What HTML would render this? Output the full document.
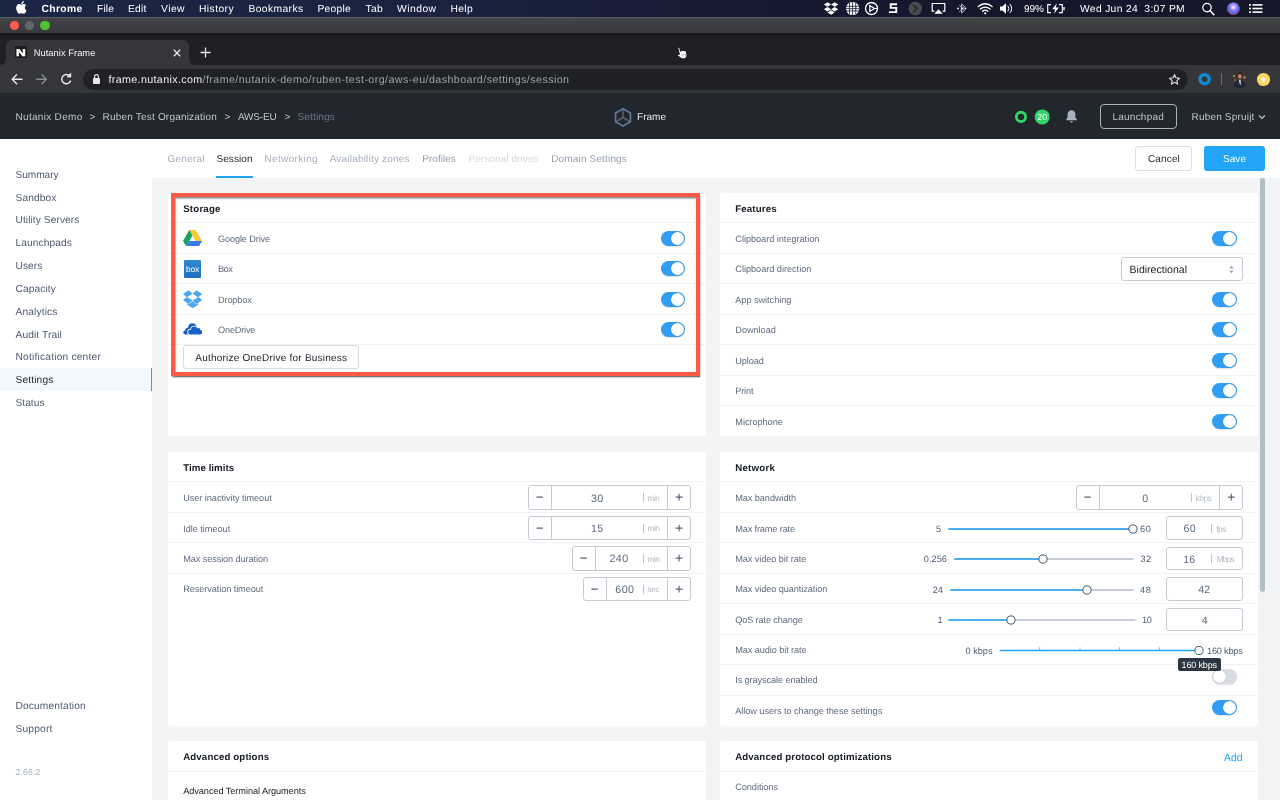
<!DOCTYPE html>
<html lang="en">
<head>
<meta charset="utf-8">
<title>Nutanix Frame</title>
<style>
*{box-sizing:border-box;margin:0;padding:0}
html,body{text-rendering:geometricPrecision;width:1280px;height:800px;overflow:hidden;background:#fff;font-family:"Liberation Sans",sans-serif;}
body{position:relative}
#root{position:absolute;left:0;top:0;width:1280px;height:800px;will-change:transform}
.a{position:absolute}
.t{position:absolute;white-space:nowrap;line-height:1;display:block}
.menubar{left:0;top:0;width:1280px;height:17px;background:linear-gradient(90deg,#1b2545 0%,#1a2240 35%,#15182e 65%,#14162a 100%)}
.titlebar{left:0;top:17px;width:1280px;height:17px;background:linear-gradient(180deg,#434447 0%,#3c3d40 60%,#38393c 100%);border-top:1px solid #5c5e62;border-bottom:1px solid #1a1a1c}
.tabstrip{left:0;top:34px;width:1280px;height:31px;background:linear-gradient(180deg,#1b1b1d 0,#1f2023 6px)}
.tab{left:6px;top:40px;width:183px;height:25px;background:#35363a;border-radius:6px 6px 0 0}
.toolbar{left:0;top:65px;width:1280px;height:28px;background:#35363a}
.urlpill{left:83px;top:68.5px;width:1105px;height:21px;border-radius:11px;background:#202124}
.apphead{left:0;top:93px;width:1280px;height:45.5px;background:#22272e}
.side{left:0;top:138.5px;width:152.300px;height:662px;background:#fff}
.tabsbar{left:152px;top:138.5px;width:1128px;height:39.5px;background:#fff}
.content{left:152px;top:178px;width:1128px;height:622px;background:#f2f4f6}
.card{position:absolute;background:#fff;border-radius:3px}
.hr{position:absolute;height:1px;background:#f0f2f5}
.tog{position:absolute;width:24.500px;height:15px;border-radius:8px;background:#2f9df1;box-shadow:0 1px 1px rgba(0,0,0,.12)}
.tog i{position:absolute;right:1px;top:1px;width:13px;height:13px;border-radius:50%;background:#fff;box-shadow:0 0 1px rgba(0,0,0,.3)}
.tog.off{background:#d8dce3}
.tog.off i{right:auto;left:1px}
.step{position:absolute;height:24.5px;border:1px solid #c5ccd6;border-radius:3px;background:#fff}
.step b{position:absolute;top:0;bottom:0;width:1px;background:#c5ccd6}
.inp{position:absolute;border:1px solid #c5ccd6;border-radius:3px;background:#fff}
.trk{position:absolute;height:1.600px;background:#b9c1cc;border-radius:1px}
.trk.on{background:#22a5f7}
.thumb{position:absolute;width:9px;height:9px;border-radius:50%;background:#fff;border:1px solid #4a5568}

</style>
</head>
<body>
<div id="root">
<div class="a menubar"></div>
<span class="t" style="left:41.50px;top:5.00px;font-size:10.3px;color:#ffffff;font-weight:700;letter-spacing:0.349px;">Chrome</span>
<span class="t" style="left:97.00px;top:5.00px;font-size:10.3px;color:#ffffff;letter-spacing:0.102px;">File</span>
<span class="t" style="left:128.00px;top:5.00px;font-size:10.3px;color:#ffffff;letter-spacing:0.188px;">Edit</span>
<span class="t" style="left:161.00px;top:5.00px;font-size:10.3px;color:#ffffff;letter-spacing:0.465px;">View</span>
<span class="t" style="left:199.00px;top:5.00px;font-size:10.3px;color:#ffffff;letter-spacing:0.422px;">History</span>
<span class="t" style="left:248.50px;top:5.00px;font-size:10.3px;color:#ffffff;letter-spacing:0.389px;">Bookmarks</span>
<span class="t" style="left:317.50px;top:5.00px;font-size:10.3px;color:#ffffff;letter-spacing:0.240px;">People</span>
<span class="t" style="left:365.50px;top:5.00px;font-size:10.3px;color:#ffffff;letter-spacing:0.297px;">Tab</span>
<span class="t" style="left:397.00px;top:5.00px;font-size:10.3px;color:#ffffff;letter-spacing:0.479px;">Window</span>
<span class="t" style="left:450.50px;top:5.00px;font-size:10.3px;color:#ffffff;letter-spacing:0.328px;">Help</span>
<span class="t" style="left:1024.00px;top:5.00px;font-size:10px;color:#ffffff;letter-spacing:-0.005px;">99%</span>
<span class="t" style="left:1080.00px;top:5.00px;font-size:10.3px;color:#ffffff;letter-spacing:0.324px;">Wed Jun 24&nbsp; 3:07 PM</span>
<svg class="a" style="left:15.1px;top:1.3px" width="12.75" height="12.75" viewBox="0 0 24 24"><path fill="#fff" d="M12.152 6.896c-.948 0-2.415-1.078-3.96-1.04-2.04.027-3.91 1.183-4.961 3.014-2.117 3.675-.546 9.103 1.519 12.09 1.013 1.454 2.208 3.09 3.792 3.039 1.52-.065 2.09-.987 3.935-.987 1.831 0 2.35.987 3.96.948 1.637-.026 2.676-1.48 3.676-2.948 1.156-1.688 1.636-3.325 1.662-3.415-.039-.013-3.182-1.221-3.22-4.857-.026-3.04 2.48-4.494 2.597-4.559-1.429-2.09-3.623-2.324-4.39-2.376-2-.156-3.675 1.09-4.61 1.09zM15.53 3.83c.843-1.012 1.4-2.427 1.245-3.83-1.207.052-2.662.805-3.532 1.818-.78.896-1.454 2.338-1.273 3.714 1.338.104 2.715-.688 3.559-1.701"/></svg>
<svg class="a" style="left:820px;top:0" width="460" height="17" viewBox="820 0 460 17">
<g fill="#fff">
<path d="M827.5 2.2l3.6 2.3-3.6 2.3-3.6-2.3zM834.7 2.2l3.6 2.3-3.6 2.3-3.6-2.3zM827.5 6.9l3.6 2.3-3.6 2.3-3.6-2.3zM834.7 6.9l3.6 2.3-3.6 2.3-3.6-2.3zM831.1 10.2l3.6 2.3-3.6 2.3-3.6-2.3z" transform="translate(0,0)"/>
<circle cx="852.6" cy="8.5" r="6.6"/>
</g>
<g stroke="#15182e" stroke-width="0.8" fill="none"><path d="M846 6.3h13M846 8.6h13M846 10.9h13M849.5 3v11M852.6 2v13M855.7 3v11"/></g>
<circle cx="871.5" cy="8.5" r="6" fill="none" stroke="#fff" stroke-width="1.3"/>
<path d="M869.8 5.6l4.6 2.9-4.6 2.9z M874.4 8.5h3" fill="none" stroke="#fff" stroke-width="1.2"/>
<path d="M897 4.3h-6.3v3.6h5.6v4.2h-7.3" fill="none" stroke="#fff" stroke-width="1.9"/>
<circle cx="915.3" cy="8.5" r="6.8" fill="#4a4a4c"/>
<path d="M913.5 5.3l3.4 3.2-3.4 3.2" fill="none" stroke="#2a2a2c" stroke-width="1.8"/>
<path d="M934.5 11.2h-2.3v-7.7h12.6v7.7h-2.3" fill="none" stroke="#fff" stroke-width="1.2"/>
<path d="M938.5 9.2l4.2 4.6h-8.4z" fill="#fff"/>
<path d="M959.3 5.2l5.4 5-3 2.8v-9l3 2.8-5.4 5" fill="none" stroke="#cfd3e0" stroke-width="0.9"/>
<circle cx="958" cy="8.5" r="0.9" fill="#fff"/><circle cx="961.7" cy="8.5" r="0.9" fill="#fff"/><circle cx="965.4" cy="8.5" r="0.9" fill="#fff"/>
<g fill="none" stroke="#fff" stroke-width="1.3" stroke-linecap="round"><path d="M978.2 6.6a10 10 0 0 1 14 0"/><path d="M980.4 9a7 7 0 0 1 9.6 0"/><path d="M982.6 11.3a4 4 0 0 1 5.2 0"/></g>
<circle cx="985.2" cy="13.3" r="1.1" fill="#fff"/>
<path d="M1000 6.4h2.4l3.6-3.2v10.6l-3.6-3.2h-2.4z" fill="#fff"/>
<g fill="none" stroke="#fff" stroke-width="1" stroke-linecap="round"><path d="M1008 6a3.6 3.6 0 0 1 0 5"/><path d="M1010 4.2a6 6 0 0 1 0 8.600"/></g>
<path d="M1051 4.600h-3.300v8h3.300M1059 4.600h3.300v8h-3.300" fill="none" stroke="#fff" stroke-width="1.100"/>
<path d="M1064 7v3.200" stroke="#fff" stroke-width="1.400"/>
<path d="M1056.800 3.200l-4.600 6h3l-1.200 4.600 4.800-6.200h-3z" fill="#fff"/>
<circle cx="1207" cy="7.600" r="4.200" fill="none" stroke="#fff" stroke-width="1.300"/><path d="M1210 10.800l3.800 3.800" stroke="#fff" stroke-width="1.500" stroke-linecap="round"/>
<defs><radialGradient id="siri" cx="50%" cy="40%" r="60%"><stop offset="0" stop-color="#fff"/><stop offset="0.35" stop-color="#b58cf0"/><stop offset="0.7" stop-color="#4a6ee0"/><stop offset="1" stop-color="#c04a9a"/></radialGradient></defs>
<circle cx="1233.400" cy="8.500" r="6.300" fill="url(#siri)"/>
<g fill="#fff"><rect x="1249" y="4.100" width="2" height="1.600"/><rect x="1252.500" y="4.100" width="10" height="1.600"/><rect x="1249" y="7.700" width="2" height="1.600"/><rect x="1252.500" y="7.700" width="10" height="1.600"/><rect x="1249" y="11.300" width="2" height="1.600"/><rect x="1252.500" y="11.300" width="10" height="1.600"/></g>
</svg>
<div class="a titlebar"></div>
<div class="a" style="left:9.9px;top:20.700000000000003px;width:9.2px;height:9.2px;border-radius:50%;background:#fe5a52"></div>
<div class="a" style="left:24.9px;top:20.700000000000003px;width:9.2px;height:9.2px;border-radius:50%;background:#636669"></div>
<div class="a" style="left:40.4px;top:20.700000000000003px;width:9.2px;height:9.2px;border-radius:50%;background:#4fc02f"></div>
<div class="a tabstrip"></div><div class="a tab"></div>
<div class="a" style="left:0;top:59px;width:6px;height:6px;background:#35363a"></div><div class="a" style="left:-6px;top:53px;width:12px;height:12px;border-radius:50%;background:#1f2023"></div>
<div class="a" style="left:189px;top:59px;width:6px;height:6px;background:#35363a"></div><div class="a" style="left:189px;top:53px;width:12px;height:12px;border-radius:50%;background:#1f2023"></div>
<div class="a" style="left:15.200px;top:46.300px;width:11.800px;height:11.800px;border-radius:1.500px;background:#1c1c1e"></div>
<span class="t" style="left:16.10px;top:49.00px;font-size:9.8px;color:#fff;font-weight:700;transform:scaleX(1.38);transform-origin:left;-webkit-text-stroke:0.500px #fff;">N</span>
<span class="t" style="left:33.70px;top:49.00px;font-size:9.3px;color:#f1f3f4;letter-spacing:0.056px;">Nutanix Frame</span>
<svg class="a" style="left:172px;top:47.5px" width="10" height="10" viewBox="0 0 10 10"><path d="M1.800 1.800l6.400 6.400M8.200 1.800l-6.400 6.400" stroke="#e8eaed" stroke-width="1.300"/></svg>
<svg class="a" style="left:199px;top:46px" width="13" height="13" viewBox="0 0 13 13"><path d="M6.500 1.500v10M1.500 6.500h10" stroke="#e8eaed" stroke-width="1.300"/></svg>
<svg class="a" style="left:675px;top:45px;transform:rotate(-14deg)" width="14" height="16" viewBox="0 0 14 16"><path d="M4.200 8.700V2.600a.9.900 0 0 1 1.800 0V6.300l.2-.6a.9.900 0 0 1 1.700.3l.2.200a.9.900 0 0 1 1.600.3l.2.300a.8.800 0 0 1 1.500.5V10.200c0 2.200-1.100 3.800-3.200 3.800H7.300c-1.400 0-2.200-.6-2.900-1.700L2 9.400c-.5-.9.600-1.600 1.300-.9z" fill="#fff" stroke="#0c0c0e" stroke-width="0.800" stroke-linejoin="round"/><path d="M6.500 9.200v2.600M8.200 9.200v2.600M9.900 9.200v2.600" stroke="#777" stroke-width="0.500"/></svg>
<div class="a toolbar"></div><div class="a urlpill"></div>
<svg class="a" style="left:8px;top:70px" width="70" height="18" viewBox="8 70 70 18" fill="none" stroke-linecap="round" stroke-linejoin="round">
<path d="M22 79.300H12.400M16.600 74.800l-4.400 4.500 4.400 4.500" stroke="#e8eaed" stroke-width="1.400"/>
<path d="M36.500 79.300h9.600M41.900 74.800l4.400 4.500-4.400 4.500" stroke="#8a8d92" stroke-width="1.400"/>
<path d="M70 76.300a4.600 4.600 0 1 0 .5 4.800" stroke="#e8eaed" stroke-width="1.400"/><path d="M70.800 73.600v3.400h-3.400z" fill="#e8eaed" stroke="#e8eaed" stroke-width="0.800"/>
</svg>
<svg class="a" style="left:92px;top:73px" width="9" height="12" viewBox="0 0 9 12"><rect x="1" y="5" width="7" height="6" rx="1" fill="#e8eaed"/><path d="M2.600 5V3.500a1.900 1.900 0 0 1 3.800 0V5" fill="none" stroke="#e8eaed" stroke-width="1.200"/></svg>
<span class="t" style="left:108.50px;top:75.00px;font-size:10.7px;color:#e8eaed;letter-spacing:0.358px;">frame.nutanix.com</span>
<span class="t" style="left:202.50px;top:75.00px;font-size:10.7px;color:#9aa0a6;letter-spacing:0.426px;">/frame/nutanix-demo/ruben-test-org/aws-eu/dashboard/settings/session</span>
<svg class="a" style="left:1168px;top:72.500px" width="13" height="13" viewBox="0 0 24 24"><path d="M12 3.300l2.700 5.700 6.200.8-4.500 4.300 1.100 6.200L12 17.300l-5.500 3 1.100-6.200L3.100 9.800l6.200-.8z" fill="none" stroke="#e8eaed" stroke-width="2"/></svg>
<svg class="a" style="left:1197px;top:72px" width="15" height="15" viewBox="0 0 15 15"><circle cx="7.600" cy="7.200" r="4.600" fill="none" stroke="#0a8edc" stroke-width="3.300"/></svg>
<div class="a" style="left:1221px;top:73px;width:1px;height:12px;background:#6a6d72"></div>
<svg class="a" style="left:1230.500px;top:70.900px" width="17" height="17" viewBox="0 0 17 17"><defs><clipPath id="avc"><circle cx="8.500" cy="8.500" r="8.500"/></clipPath></defs><g clip-path="url(#avc)"><rect width="17" height="17" fill="#3b3430"/><circle cx="3" cy="5" r="1.200" fill="#8a8078"/><circle cx="13.500" cy="6.500" r="1.300" fill="#a58a52"/><circle cx="4" cy="9" r="0.800" fill="#b08a4a"/><path d="M2.500 17c0-5 2.500-7.500 6.300-7.500s6 2.500 6 7.500z" fill="#1f2531"/><ellipse cx="8.800" cy="3.300" rx="2.300" ry="1.700" fill="#2a1c14"/><ellipse cx="8.800" cy="5.300" rx="1.800" ry="2.400" fill="#c4835a"/><path d="M8 8.800h1.800l.4 5.200H7.800z" fill="#b9c6dc"/><path d="M8.700 11l.9 3-.9 3-.7-3z" fill="#1b1e26"/></g></svg>
<div class="a" style="left:1257.100px;top:73.100px;width:12.600px;height:12.600px;border-radius:50%;background:#fdd663"></div>
<svg class="a" style="left:1259.900px;top:75.800px" width="7" height="7" viewBox="0 0 7 7"><path d="M3.500 .6L6.400 3.600H4.600v2.600H2.400V3.600H.6z" fill="#fff"/></svg>
<div class="a apphead"></div>
<span class="t" style="left:15.50px;top:113.00px;font-size:10px;color:#bec6d0;letter-spacing:0.303px;">Nutanix Demo</span>
<span class="t" style="left:89.50px;top:113.00px;font-size:10px;color:#bec6d0;">&gt;</span>
<span class="t" style="left:102.50px;top:113.00px;font-size:10px;color:#bec6d0;letter-spacing:0.200px;">Ruben Test Organization</span>
<span class="t" style="left:224.50px;top:113.00px;font-size:10px;color:#bec6d0;">&gt;</span>
<span class="t" style="left:238.00px;top:113.00px;font-size:10px;color:#bec6d0;letter-spacing:-0.190px;">AWS-EU</span>
<span class="t" style="left:284.50px;top:113.00px;font-size:10px;color:#bec6d0;">&gt;</span>
<span class="t" style="left:297.50px;top:113.00px;font-size:10px;color:#6b7685;letter-spacing:0.170px;">Settings</span>
<svg class="a" style="left:613px;top:106.500px" width="20" height="21" viewBox="0 0 20 21" fill="none" stroke-linejoin="round"><path d="M10 10.500V2M10 10.500L3 14.600M10 10.500l7 4.100" stroke="#5d6168" stroke-width="1.500"/><path d="M10 1.700l7.400 4.300v8.700L10 19l-7.400-4.300V6z" stroke="#5f7898" stroke-width="1.700"/></svg>
<span class="t" style="left:637.00px;top:113.00px;font-size:10px;color:#e6e9ed;letter-spacing:0.019px;">Frame</span>
<svg class="a" style="left:1013px;top:109px" width="16" height="16" viewBox="0 0 16 16"><circle cx="8" cy="7.900" r="4.600" fill="none" stroke="#2fd566" stroke-width="2.900"/></svg>
<svg class="a" style="left:1034px;top:109px" width="16" height="16" viewBox="0 0 16 16"><circle cx="8.200" cy="7.900" r="7.500" fill="#2fd566"/></svg>
<span class="t" style="left:1037.20px;top:113.00px;font-size:8.8px;color:#fff;letter-spacing:0.202px;">20</span>
<svg class="a" style="left:1065px;top:109px" width="13" height="15" viewBox="0 0 13 15"><path d="M6.500 1.200c-2.400 0-3.900 1.800-3.900 4.200v2.800L1.200 10.400v.8h10.600v-.8L10.400 8.200V5.400c0-2.400-1.500-4.200-3.900-4.200z" fill="#a9b2bf"/><path d="M5.100 12.300a1.400 1.400 0 0 0 2.800 0z" fill="#a9b2bf"/></svg>
<div class="a" style="left:1100.200px;top:104.200px;width:76.400px;height:24.700px;border:1px solid #aab2bd;border-radius:4px"></div>
<span class="t" style="left:1112.50px;top:113.00px;font-size:10px;color:#bec6d0;letter-spacing:0.222px;">Launchpad</span>
<span class="t" style="left:1191.50px;top:113.00px;font-size:10px;color:#bec6d0;letter-spacing:0.185px;">Ruben Spruijt</span>
<svg class="a" style="left:1257.500px;top:114px" width="8" height="6" viewBox="0 0 8 6"><path d="M1.200 1.500l2.800 2.800 2.800-2.800" fill="none" stroke="#c3cad4" stroke-width="1.200"/></svg>
<div class="a side"></div>
<div class="a" style="left:0;top:368px;width:152px;height:23px;background:#f3faff"></div><div class="a" style="left:150.700px;top:368px;width:1.600px;height:23px;background:#22a5f7"></div>
<span class="t" style="left:15.50px;top:171.00px;font-size:10.2px;color:#4d5a6e;letter-spacing:-0.085px;">Summary</span>
<span class="t" style="left:15.50px;top:194.00px;font-size:10.2px;color:#4d5a6e;letter-spacing:0.112px;">Sandbox</span>
<span class="t" style="left:15.50px;top:216.00px;font-size:10.2px;color:#4d5a6e;letter-spacing:0.077px;">Utility Servers</span>
<span class="t" style="left:15.50px;top:239.00px;font-size:10.2px;color:#4d5a6e;letter-spacing:0.098px;">Launchpads</span>
<span class="t" style="left:15.50px;top:262.00px;font-size:10.2px;color:#4d5a6e;letter-spacing:0.078px;">Users</span>
<span class="t" style="left:15.50px;top:285.00px;font-size:10.2px;color:#4d5a6e;letter-spacing:0.107px;">Capacity</span>
<span class="t" style="left:15.50px;top:308.00px;font-size:10.2px;color:#4d5a6e;letter-spacing:0.137px;">Analytics</span>
<span class="t" style="left:15.50px;top:331.00px;font-size:10.2px;color:#4d5a6e;letter-spacing:0.109px;">Audit Trail</span>
<span class="t" style="left:15.50px;top:353.00px;font-size:10.2px;color:#4d5a6e;letter-spacing:0.208px;">Notification center</span>
<span class="t" style="left:15.50px;top:376.00px;font-size:10.2px;color:#1d242e;letter-spacing:0.148px;">Settings</span>
<span class="t" style="left:15.50px;top:399.00px;font-size:10.2px;color:#4d5a6e;letter-spacing:0.018px;">Status</span>
<span class="t" style="left:15.50px;top:702.00px;font-size:10.2px;color:#4d5a6e;letter-spacing:0.144px;">Documentation</span>
<span class="t" style="left:15.50px;top:725.00px;font-size:10.2px;color:#4d5a6e;letter-spacing:0.188px;">Support</span>
<span class="t" style="left:15.50px;top:768.00px;font-size:8.5px;color:#a3abb6;letter-spacing:0.227px;">2.66.2</span>
<div class="a tabsbar"></div><div class="a content"></div>
<span class="t" style="left:167.60px;top:155.00px;font-size:10px;color:#a5aebb;letter-spacing:0.217px;">General</span>
<span class="t" style="left:216.40px;top:155.00px;font-size:10px;color:#1d242e;letter-spacing:0.103px;">Session</span>
<span class="t" style="left:264.50px;top:155.00px;font-size:10px;color:#a5aebb;letter-spacing:0.347px;">Networking</span>
<span class="t" style="left:329.70px;top:155.00px;font-size:10px;color:#a5aebb;letter-spacing:0.198px;">Availability zones</span>
<span class="t" style="left:422.30px;top:155.00px;font-size:10px;color:#939dab;letter-spacing:0.030px;">Profiles</span>
<span class="t" style="left:468.40px;top:155.00px;font-size:10px;color:#d3d8df;letter-spacing:0.092px;">Personal drives</span>
<span class="t" style="left:551.20px;top:155.00px;font-size:10px;color:#939dab;letter-spacing:0.162px;">Domain Settings</span>
<div class="a" style="left:216.400px;top:176px;width:36.300px;height:2px;background:#22a5f7"></div>
<div class="a" style="left:1135.400px;top:146.400px;width:56.800px;height:24.200px;border:1px solid #d9dee4;border-radius:3px;background:#fff"></div>
<span class="t" style="left:1148.00px;top:155.00px;font-size:10px;color:#1d242e;letter-spacing:0.143px;">Cancel</span>
<div class="a" style="left:1204px;top:146.400px;width:60.800px;height:24.200px;border-radius:3px;background:#22a5f7"></div>
<span class="t" style="left:1223.00px;top:155.00px;font-size:10px;color:#fff;letter-spacing:0.051px;">Save</span>
<div class="a" style="left:1260px;top:177.600px;width:4.800px;height:414px;border-radius:2.400px;background:#b0bec5"></div>
<div class="card" style="left:167.5px;top:193px;width:538.5px;height:243px"></div>
<div class="card" style="left:720px;top:193px;width:538px;height:243px"></div>
<div class="card" style="left:167.5px;top:451.7px;width:538.5px;height:274px"></div>
<div class="card" style="left:720px;top:451.7px;width:538px;height:274px"></div>
<div class="card" style="left:167.5px;top:741.3px;width:538.5px;height:70px"></div>
<div class="card" style="left:720px;top:741.3px;width:538px;height:70px"></div>
<span class="t" style="left:183.20px;top:205.00px;font-size:9.7px;color:#171c23;font-weight:700;letter-spacing:0.203px;">Storage</span>
<div class="hr" style="left:167.5px;top:222px;width:538.5px"></div>
<div class="hr" style="left:167.5px;top:253px;width:538.5px"></div>
<div class="hr" style="left:167.5px;top:283px;width:538.5px"></div>
<div class="hr" style="left:167.5px;top:314px;width:538.5px"></div>
<div class="hr" style="left:167.5px;top:344px;width:538.5px"></div>
<span class="t" style="left:218.00px;top:235.00px;font-size:9.2px;color:#5f6b7d;letter-spacing:-0.135px;">Google Drive</span>
<div class="tog" style="left:660.5px;top:231.0px"><i></i></div>
<span class="t" style="left:218.00px;top:265.00px;font-size:9.2px;color:#5f6b7d;letter-spacing:-0.515px;">Box</span>
<div class="tog" style="left:660.5px;top:261.45px"><i></i></div>
<span class="t" style="left:218.00px;top:296.00px;font-size:9.2px;color:#5f6b7d;letter-spacing:-0.148px;">Dropbox</span>
<div class="tog" style="left:660.5px;top:291.9px"><i></i></div>
<span class="t" style="left:218.00px;top:326.00px;font-size:9.2px;color:#5f6b7d;letter-spacing:-0.189px;">OneDrive</span>
<div class="tog" style="left:660.5px;top:322.35px"><i></i></div>
<svg class="a" style="left:183px;top:230px" width="19" height="16.4" viewBox="0 0 19 16.4"><path d="M6.3 0h6.4l6.300 10.900h-6.400z" fill="#fbc934"/><path d="M6.300 0L0 10.900l3.200 5.500L9.500 5.500z" fill="#1aa05e"/><path d="M6.300 10.900h12.700l-3.200 5.500H3.200z" fill="#3b78e7"/></svg>
<div class="a" style="left:183.700px;top:259.800px;width:17.700px;height:17.800px;background:linear-gradient(180deg,#3089d6,#1e70bb);border-radius:1px"></div>
<span class="t" style="left:186.00px;top:265.00px;font-size:8.4px;color:#fff;letter-spacing:-0.172px;">box</span>
<svg class="a" style="left:183px;top:289.800px" width="19.200" height="18.600" viewBox="0 0 42.800 40"><path fill="#4ba7ef" d="M12.600 0 0 8.200l8.700 7 12.700-7.800zM0 22.100l12.600 8.200 8.800-7.400-12.700-7.800zM21.400 22.900l8.800 7.400 12.600-8.200-8.700-7zM42.800 8.200 30.200 0l-8.800 7.400 12.700 7.800zM21.500 24.500l-8.900 7.300-3.800-2.500v2.800l12.700 7.600 12.700-7.600v-2.800l-3.800 2.500z"/></svg>
<svg class="a" style="left:183px;top:323.400px" width="19.400" height="12" viewBox="0 0 19.400 12"><defs><clipPath id="odc"><rect x="0" y="0" width="19.400" height="11.700"/></clipPath></defs><g clip-path="url(#odc)"><g fill="#1660c8"><circle cx="9.4" cy="4.7" r="4.40"/><circle cx="4.9" cy="7.4" r="2.70"/><circle cx="2.4" cy="9.5" r="2.10"/><rect x="2.40" y="8.00" width="8.00" height="3.60"/></g><g fill="#fff"><circle cx="7.6" cy="9.1" r="3.35"/><circle cx="11.3" cy="6.7" r="4.05"/><circle cx="15.2" cy="7.3" r="3.15"/><circle cx="16.9" cy="9.3" r="3.15"/><rect x="6.75" y="7.15" width="11.00" height="4.45"/></g><g fill="#1660c8"><circle cx="7.6" cy="9.1" r="2.50"/><circle cx="11.3" cy="6.7" r="3.20"/><circle cx="15.2" cy="7.3" r="2.30"/><circle cx="16.9" cy="9.3" r="2.30"/><rect x="7.60" y="8.00" width="9.30" height="3.60"/></g></g></svg>
<div class="a" style="left:183.300px;top:345.400px;width:176.100px;height:24.100px;border:1px solid #d7dce3;border-radius:3px;background:#fff"></div>
<span class="t" style="left:195.30px;top:354.00px;font-size:10px;color:#171c23;letter-spacing:0.223px;">Authorize OneDrive for Business</span>
<div class="a" style="left:171px;top:193.100px;width:528.500px;height:182.900px;border:4px solid #fc5a47;box-shadow:0.5px 1.500px 1.500px rgba(50,60,64,.7), inset 0.5px 1.500px 1.500px rgba(50,60,64,.6)"></div>
<span class="t" style="left:735.30px;top:205.00px;font-size:9.7px;color:#171c23;font-weight:700;letter-spacing:0.126px;">Features</span>
<div class="hr" style="left:720px;top:222px;width:538px"></div>
<div class="hr" style="left:720px;top:253px;width:538px"></div>
<div class="hr" style="left:720px;top:283px;width:538px"></div>
<div class="hr" style="left:720px;top:314px;width:538px"></div>
<div class="hr" style="left:720px;top:344px;width:538px"></div>
<div class="hr" style="left:720px;top:375px;width:538px"></div>
<div class="hr" style="left:720px;top:405px;width:538px"></div>
<span class="t" style="left:735.30px;top:235.00px;font-size:9.2px;color:#5f6b7d;letter-spacing:-0.038px;">Clipboard integration</span>
<div class="tog" style="left:1212px;top:231.0px"><i></i></div>
<span class="t" style="left:735.30px;top:265.00px;font-size:9.2px;color:#5f6b7d;letter-spacing:-0.032px;">Clipboard direction</span>
<span class="t" style="left:735.30px;top:296.00px;font-size:9.2px;color:#5f6b7d;letter-spacing:-0.053px;">App switching</span>
<div class="tog" style="left:1212px;top:291.9px"><i></i></div>
<span class="t" style="left:735.30px;top:326.00px;font-size:9.2px;color:#5f6b7d;letter-spacing:-0.045px;">Download</span>
<div class="tog" style="left:1212px;top:322.35px"><i></i></div>
<span class="t" style="left:735.30px;top:357.00px;font-size:9.2px;color:#5f6b7d;letter-spacing:-0.104px;">Upload</span>
<div class="tog" style="left:1212px;top:352.8px"><i></i></div>
<span class="t" style="left:735.30px;top:387.00px;font-size:9.2px;color:#5f6b7d;letter-spacing:-0.181px;">Print</span>
<div class="tog" style="left:1212px;top:383.25px"><i></i></div>
<span class="t" style="left:735.30px;top:418.00px;font-size:9.2px;color:#5f6b7d;letter-spacing:-0.052px;">Microphone</span>
<div class="tog" style="left:1212px;top:413.7px"><i></i></div>
<div class="a" style="left:1121px;top:257.200px;width:121.600px;height:23.400px;border:1px solid #c5ccd6;border-radius:3px;background:#fff"></div>
<span class="t" style="left:1129.50px;top:265.00px;font-size:10.5px;color:#171c23;letter-spacing:0.023px;">Bidirectional</span>
<svg class="a" style="left:1228.500px;top:264.500px" width="5" height="9" viewBox="0 0 5 9"><path d="M2.500 .5L4.600 3.400H.4zM2.500 8.500L4.600 5.600H.4z" fill="#9aa3b0"/></svg>
<span class="t" style="left:183.25px;top:464.00px;font-size:9.7px;color:#171c23;font-weight:700;letter-spacing:0.051px;">Time limits</span>
<div class="hr" style="left:167.5px;top:481px;width:538.5px"></div>
<div class="hr" style="left:167.5px;top:512px;width:538.5px"></div>
<div class="hr" style="left:167.5px;top:542px;width:538.5px"></div>
<div class="hr" style="left:167.5px;top:573px;width:538.5px"></div>
<span class="t" style="left:183.20px;top:494.00px;font-size:9.2px;color:#5f6b7d;letter-spacing:-0.060px;">User inactivity timeout</span>
<span class="t" style="left:183.20px;top:525.00px;font-size:9.2px;color:#5f6b7d;letter-spacing:-0.042px;">Idle timeout</span>
<span class="t" style="left:183.20px;top:555.00px;font-size:9.2px;color:#5f6b7d;letter-spacing:-0.106px;">Max session duration</span>
<span class="t" style="left:183.20px;top:585.00px;font-size:9.2px;color:#5f6b7d;letter-spacing:-0.090px;">Reservation timeout</span>
<div class="step" style="left:528.3px;top:485.3px;width:162.5px"><b style="left:22.2px"></b><b style="right:22.2px"></b></div>
<svg class="a" style="left:528.3px;top:485.3px" width="162.5" height="24.5" viewBox="0 0 162.5 24.5"><path d="M8.40 12.1h6.4M147.70 12.1h6.800M151.10 8.700v6.800" stroke="#566174" stroke-width="1.100" fill="none"/></svg>
<span class="t" style="left:591.05px;top:494.00px;font-size:10.7px;color:#5f6b7d;letter-spacing:0.205px;">30</span>
<div class="a" style="left:643.2px;top:493.0px;width:1px;height:9px;background:#bcc4ce"></div>
<span class="t" style="left:647.60px;top:494.00px;font-size:8.3px;color:#b3bbc6;letter-spacing:-0.592px;">min</span>
<div class="step" style="left:528.3px;top:515.8px;width:162.5px"><b style="left:22.2px"></b><b style="right:22.2px"></b></div>
<svg class="a" style="left:528.3px;top:515.8px" width="162.5" height="24.5" viewBox="0 0 162.5 24.5"><path d="M8.40 12.1h6.4M147.70 12.1h6.800M151.10 8.700v6.800" stroke="#566174" stroke-width="1.100" fill="none"/></svg>
<span class="t" style="left:591.05px;top:524.00px;font-size:10.7px;color:#5f6b7d;letter-spacing:0.205px;">15</span>
<div class="a" style="left:643.2px;top:523.5px;width:1px;height:9px;background:#bcc4ce"></div>
<span class="t" style="left:647.60px;top:524.00px;font-size:8.3px;color:#b3bbc6;letter-spacing:-0.592px;">min</span>
<div class="step" style="left:572.3px;top:546.3px;width:118.5px"><b style="left:22.2px"></b><b style="right:22.2px"></b></div>
<svg class="a" style="left:572.3px;top:546.3px" width="118.5" height="24.5" viewBox="0 0 118.5 24.5"><path d="M8.40 12.1h6.4M103.70 12.1h6.800M107.10 8.700v6.800" stroke="#566174" stroke-width="1.100" fill="none"/></svg>
<span class="t" style="left:609.50px;top:554.00px;font-size:10.7px;color:#5f6b7d;letter-spacing:0.385px;">240</span>
<div class="a" style="left:643.2px;top:554.0px;width:1px;height:9px;background:#bcc4ce"></div>
<span class="t" style="left:647.60px;top:555.00px;font-size:8.3px;color:#b3bbc6;letter-spacing:-0.592px;">min</span>
<div class="step" style="left:583.3px;top:576.8px;width:107.5px"><b style="left:22.2px"></b><b style="right:22.2px"></b></div>
<svg class="a" style="left:583.3px;top:576.8px" width="107.5" height="24.5" viewBox="0 0 107.5 24.5"><path d="M8.40 12.1h6.4M92.70 12.1h6.800M96.10 8.700v6.800" stroke="#566174" stroke-width="1.100" fill="none"/></svg>
<span class="t" style="left:615.30px;top:585.00px;font-size:10.7px;color:#5f6b7d;letter-spacing:0.385px;">600</span>
<div class="a" style="left:643.2px;top:584.5px;width:1px;height:9px;background:#bcc4ce"></div>
<span class="t" style="left:647.60px;top:585.00px;font-size:8.3px;color:#b3bbc6;letter-spacing:-0.441px;">sec</span>
<span class="t" style="left:735.20px;top:464.00px;font-size:9.7px;color:#171c23;font-weight:700;letter-spacing:0.252px;">Network</span>
<div class="hr" style="left:720px;top:481px;width:538px"></div>
<div class="hr" style="left:720px;top:512px;width:538px"></div>
<div class="hr" style="left:720px;top:542px;width:538px"></div>
<div class="hr" style="left:720px;top:573px;width:538px"></div>
<div class="hr" style="left:720px;top:603px;width:538px"></div>
<div class="hr" style="left:720px;top:634px;width:538px"></div>
<div class="hr" style="left:720px;top:664px;width:538px"></div>
<div class="hr" style="left:720px;top:695px;width:538px"></div>
<span class="t" style="left:735.20px;top:494.00px;font-size:9.2px;color:#5f6b7d;letter-spacing:-0.077px;">Max bandwidth</span>
<span class="t" style="left:735.20px;top:525.00px;font-size:9.2px;color:#5f6b7d;letter-spacing:-0.142px;">Max frame rate</span>
<span class="t" style="left:735.20px;top:555.00px;font-size:9.2px;color:#5f6b7d;letter-spacing:-0.084px;">Max video bit rate</span>
<span class="t" style="left:735.20px;top:585.00px;font-size:9.2px;color:#5f6b7d;letter-spacing:-0.090px;">Max video quantization</span>
<span class="t" style="left:735.20px;top:616.00px;font-size:9.2px;color:#5f6b7d;letter-spacing:-0.131px;">QoS rate change</span>
<span class="t" style="left:735.20px;top:646.00px;font-size:9.2px;color:#5f6b7d;letter-spacing:-0.096px;">Max audio bit rate</span>
<span class="t" style="left:735.20px;top:676.00px;font-size:9.2px;color:#5f6b7d;letter-spacing:-0.099px;">Is grayscale enabled</span>
<span class="t" style="left:735.20px;top:707.00px;font-size:9.2px;color:#5f6b7d;letter-spacing:-0.059px;">Allow users to change these settings</span>
<div class="step" style="left:1076.1px;top:485.3px;width:166.7px"><b style="left:22.2px"></b><b style="right:22.2px"></b></div>
<svg class="a" style="left:1076.1px;top:485.3px" width="166.7" height="24.5" viewBox="0 0 166.7 24.5"><path d="M8.40 12.1h6.4M151.90 12.1h6.800M155.30 8.700v6.800" stroke="#566174" stroke-width="1.100" fill="none"/></svg>
<span class="t" style="left:1142.30px;top:494.00px;font-size:10.7px;color:#5f6b7d;">0</span>
<div class="a" style="left:1191px;top:493.0px;width:1px;height:9px;background:#bcc4ce"></div>
<span class="t" style="left:1195.60px;top:494.00px;font-size:8.3px;color:#b3bbc6;letter-spacing:-0.383px;">kbps</span>
<div class="inp" style="left:1166.200px;top:516.2px;width:76.600px;height:23.700px"></div>
<span class="t" style="left:1183.55px;top:524.00px;font-size:10.7px;color:#5f6b7d;letter-spacing:0.205px;">60</span>
<div class="a" style="left:1211.200px;top:523.7px;width:1px;height:9px;background:#bcc4ce"></div>
<span class="t" style="left:1216.20px;top:525.00px;font-size:8.3px;color:#b3bbc6;letter-spacing:-0.426px;">fps</span>
<div class="inp" style="left:1166.200px;top:546.6px;width:76.600px;height:23.700px"></div>
<span class="t" style="left:1183.15px;top:555.00px;font-size:10.7px;color:#5f6b7d;letter-spacing:0.205px;">16</span>
<div class="a" style="left:1211.200px;top:554.1px;width:1px;height:9px;background:#bcc4ce"></div>
<span class="t" style="left:1216.70px;top:555.00px;font-size:8.3px;color:#b3bbc6;letter-spacing:-0.749px;">Mbps</span>
<div class="inp" style="left:1166.200px;top:577.1px;width:76.600px;height:23.700px"></div>
<span class="t" style="left:1198.15px;top:585.00px;font-size:10.7px;color:#5f6b7d;letter-spacing:0.205px;">42</span>
<div class="inp" style="left:1166.200px;top:607.6px;width:76.600px;height:23.700px"></div>
<span class="t" style="left:1201.70px;top:616.00px;font-size:10.7px;color:#5f6b7d;">4</span>
<svg class="a" style="left:900px;top:518.9px" width="360" height="20" viewBox="900 518.9 360 20"><path d="M949 528.9H1133" stroke="#b7bfca" stroke-width="1.600" stroke-linecap="round"/><path d="M949 528.9H1133" stroke="#22a5f7" stroke-width="1.700" stroke-linecap="round"/><circle cx="1133" cy="528.9" r="4.100" fill="#fff" stroke="#4a5568" stroke-width="1"/></svg>
<span class="t" style="left:936.00px;top:525.00px;font-size:9.2px;color:#4d5a6e;">5</span>
<span class="t" style="left:1140.00px;top:525.00px;font-size:9.2px;color:#4d5a6e;letter-spacing:0.633px;">60</span>
<svg class="a" style="left:900px;top:549.4px" width="360" height="20" viewBox="900 549.4 360 20"><path d="M955 559.4H1133" stroke="#b7bfca" stroke-width="1.600" stroke-linecap="round"/><path d="M955 559.4H1043" stroke="#22a5f7" stroke-width="1.700" stroke-linecap="round"/><circle cx="1043" cy="559.4" r="4.100" fill="#fff" stroke="#4a5568" stroke-width="1"/></svg>
<span class="t" style="left:923.75px;top:555.00px;font-size:9.2px;color:#4d5a6e;letter-spacing:0.050px;">0.256</span>
<span class="t" style="left:1140.50px;top:555.00px;font-size:9.2px;color:#4d5a6e;letter-spacing:0.383px;">32</span>
<svg class="a" style="left:900px;top:579.9px" width="360" height="20" viewBox="900 579.9 360 20"><path d="M951 589.9H1133" stroke="#b7bfca" stroke-width="1.600" stroke-linecap="round"/><path d="M951 589.9H1087" stroke="#22a5f7" stroke-width="1.700" stroke-linecap="round"/><circle cx="1087" cy="589.9" r="4.100" fill="#fff" stroke="#4a5568" stroke-width="1"/></svg>
<span class="t" style="left:932.75px;top:586.00px;font-size:9.2px;color:#4d5a6e;letter-spacing:-0.117px;">24</span>
<span class="t" style="left:1140.00px;top:586.00px;font-size:9.2px;color:#4d5a6e;letter-spacing:0.633px;">48</span>
<svg class="a" style="left:900px;top:610.3px" width="360" height="20" viewBox="900 610.3 360 20"><path d="M949 620.3H1135" stroke="#b7bfca" stroke-width="1.600" stroke-linecap="round"/><path d="M949 620.3H1011" stroke="#22a5f7" stroke-width="1.700" stroke-linecap="round"/><circle cx="1011" cy="620.3" r="4.100" fill="#fff" stroke="#4a5568" stroke-width="1"/></svg>
<span class="t" style="left:937.50px;top:616.00px;font-size:9.2px;color:#4d5a6e;">1</span>
<span class="t" style="left:1142.00px;top:616.00px;font-size:9.2px;color:#4d5a6e;letter-spacing:-0.367px;">10</span>
<svg class="a" style="left:990px;top:640px" width="220" height="20" viewBox="990 640 220 20"><path d="M1039.6 647.300V650M1080 647.300V650M1119.5 647.300V650M1159.4 647.300V650" stroke="#5bbcf9" stroke-width="0.900"/><path d="M1000.300 650.500H1199" stroke="#22a5f7" stroke-width="1.700" stroke-linecap="round"/><circle cx="1199" cy="650.500" r="4.100" fill="#fff" stroke="#4a5568" stroke-width="1"/></svg>
<span class="t" style="left:965.50px;top:647.00px;font-size:9.2px;color:#4d5a6e;letter-spacing:-0.013px;">0 kbps</span>
<span class="t" style="left:1207.00px;top:647.00px;font-size:9.2px;color:#4d5a6e;letter-spacing:-0.212px;">160 kbps</span>
<div class="tog off" style="left:1212px;top:669.3px"><i></i></div>
<div class="tog" style="left:1212px;top:699.8px"><i></i></div>
<div class="a" style="left:1178px;top:658.200px;width:42.700px;height:12.400px;border-radius:2px;background:#2d3642"></div>
<span class="t" style="left:1181.50px;top:661.00px;font-size:9px;color:#fff;letter-spacing:-0.129px;">160 kbps</span>
<span class="t" style="left:183.20px;top:753.00px;font-size:9.7px;color:#171c23;font-weight:700;letter-spacing:0.127px;">Advanced options</span>
<div class="hr" style="left:167.5px;top:771px;width:538.5px"></div>
<div class="hr" style="left:720px;top:771px;width:538px"></div>
<span class="t" style="left:183.20px;top:787.00px;font-size:9.2px;color:#171c23;letter-spacing:-0.072px;">Advanced Terminal Arguments</span>
<span class="t" style="left:735.20px;top:753.00px;font-size:9.7px;color:#171c23;font-weight:700;letter-spacing:0.117px;">Advanced protocol optimizations</span>
<span class="t" style="left:1224.00px;top:753.00px;font-size:10.5px;color:#22a5f7;letter-spacing:-0.062px;">Add</span>
<span class="t" style="left:735.20px;top:783.00px;font-size:9.2px;color:#5f6b7d;letter-spacing:-0.062px;">Conditions</span>
</div>
</body>
</html>
